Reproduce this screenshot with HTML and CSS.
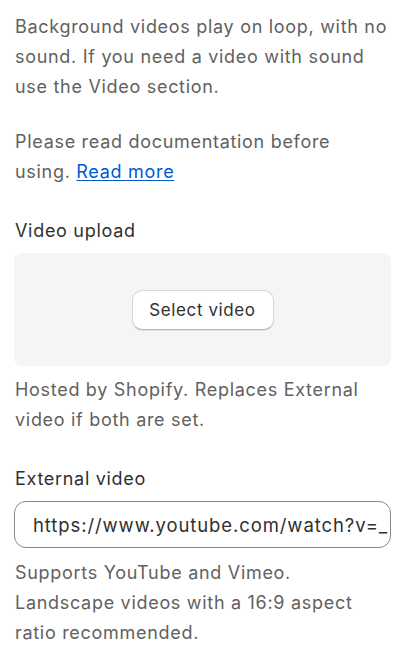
FILE: index.html
```html
<!DOCTYPE html>
<html>
<head>
<meta charset="utf-8">
<link rel="stylesheet" href="styles.css">
</head>
<body>
<div class="panel">
  <p class="help intro">Background videos play on loop, with no sound. If you need a video with sound use the Video section.</p>
  <p class="help doc">Please read documentation before using. <a href="#" class="link">Read more</a></p>

  <div class="field upload-field">
    <div class="label">Video upload</div>
    <div class="dropzone">
      <button class="btn">Select video</button>
    </div>
    <p class="help">Hosted by Shopify. Replaces External video if both are set.</p>
  </div>

  <div class="field external-field">
    <div class="label">External video</div>
    <div class="input"><span class="input-text">https://www.youtube.com/watch?v=_dQw4w9WgXcQ</span></div>
    <p class="help">Supports YouTube and Vimeo. Landscape videos with a 16:9 aspect ratio recommended.</p>
  </div>
</div>
</body>
</html>
```
FILE: styles.css
```css
* { box-sizing: border-box; }
html, body { margin: 0; padding: 0; background: #ffffff; }
body {
  font-family: Inter, "Noto Sans", sans-serif;
  font-size: 18px;
  line-height: 30px;
  letter-spacing: 0.7px;
  color: #303030;
}
.panel {
  padding: 12px 13px 0 14px;
  display: flex;
  flex-direction: column;
}
p { margin: 0; }
.help { color: #616161; }
.intro { padding-left: 1px; }
.doc { margin-top: 25px; padding-left: 1px; }
.link { color: #005bd3; text-decoration: underline; text-underline-offset: 2px; }
.field { display: flex; flex-direction: column; }
.upload-field { margin-top: 29px; }
.external-field { margin-top: 29px; }
.label { padding-left: 1px; margin-bottom: 7px; }
.dropzone {
  height: 113px;
  background: #f5f5f5;
  border-radius: 8px;
  display: flex;
  align-items: center;
  justify-content: center;
}
.btn {
  font-family: inherit;
  font-size: 17px;
  letter-spacing: 0.6px;
  color: #303030;
  background: #ffffff;
  border: 1px solid #d6d6d6;
  border-bottom-color: #b5b5b5;
  border-radius: 10px;
  width: 142px;
  height: 40px;
  padding: 0;
  box-shadow: 0 1px 0 rgba(0,0,0,0.08);
}
.field .help { margin-top: 9px; padding-left: 1px; }
.external-field .help { margin-top: 10px; }
.input {
  height: 47px;
  border: 1px solid #8a8a8a;
  border-radius: 12px;
  padding: 0 0 0 18px;
  display: flex;
  align-items: center;
  overflow: hidden;
  white-space: nowrap;
  color: #303030;
}
.input-text { display: block; overflow: hidden; width: 356px; font-size: 18.5px; letter-spacing: 0.9px; }
```
